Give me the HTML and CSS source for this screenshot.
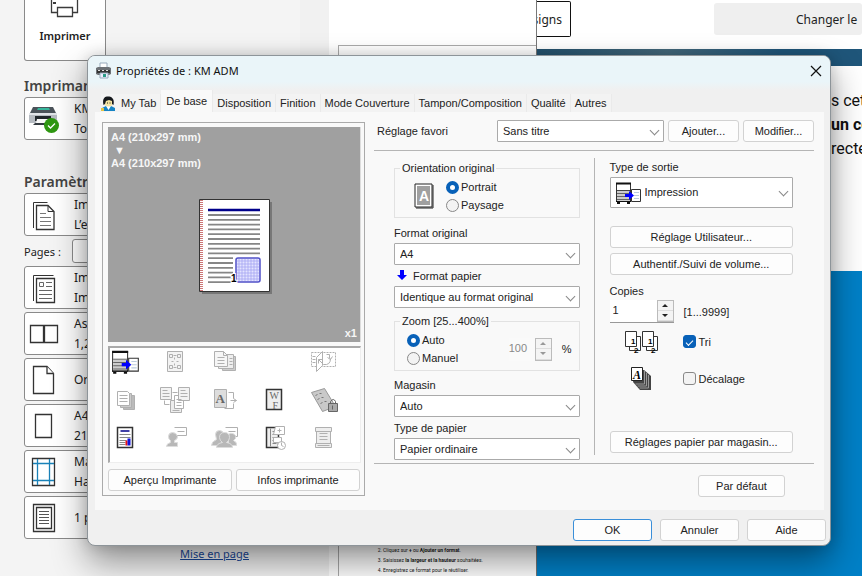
FILE: index.html
```html
<!DOCTYPE html>
<html lang="fr">
<head>
<meta charset="utf-8">
<title>Propriétés de : KM ADM</title>
<link rel="stylesheet" href="styles.css">
</head>
<body>
<svg class="defs" aria-hidden="true">
  <symbol id="output" viewBox="0 0 28 24">
    <path d="M1.500 2.500h14v18h-14z" fill="#fff" stroke="#333"/>
    <path d="M1 2.500h15" stroke="#111" stroke-width="2"/>
    <path d="M2 9.500h13" stroke="#444"/>
    <path d="M2 10h13v10H2z" fill="#ccc"/>
    <path d="M2 12.500h13M2 15.500h13M2 18.500h13" stroke="#666"/>
    <path d="M1 20.500h15" stroke="#111"/>
    <path d="M2 22h3M12 22h3" stroke="#111" stroke-width="2"/>
    <path d="M16.500 8.500h9v12h-9z" fill="#fff" stroke="#333"/>
    <path d="M19 11.500h5M19 14.500h5M19 17.500h5" stroke="#bcd"/>
    <path d="M10 13h4v-3l5 4.500-5 4.500v-3h-4z" fill="#00f"/>
  </symbol>
</svg>

<div class="desktop">
  <aside class="print-pane">
    <button class="print-button" type="button">
      <svg width="30" height="24" viewBox="0 0 30 24" fill="#fff" stroke="#3b3b3b" stroke-width="1.300"><path d="M1.500 0v18.500h26V0"/><path d="M7.500 13.500h15v9h-15z"/><path d="M3 9h3" stroke-width="2"/></svg>
      Imprimer
    </button>
    <h2>Imprimante</h2>
    <button class="option printer" type="button">
      <svg width="32" height="30" viewBox="0 0 32 30"><path d="M5 3h20l3 6H2z" fill="#4b535a"/><path d="M10 4h11l1 2H9z" fill="#36b79c"/><path d="M1 9h28v10H1z" fill="#b7bcc2"/><path d="M1 9h28v2H1z" fill="#e1e4e8"/><path d="M7 12h16v5H7z" fill="#20262b"/><path d="M7 19h18v2H5z" fill="#343b41"/><path d="M9 15h12l1 4H8z" fill="#fafafa"/><circle cx="23.500" cy="21.500" r="7.500" fill="#2f9712"/><path d="M20 21.500l2.500 2.500 4.500-4.500" fill="none" stroke="#fff" stroke-width="1.300"/></svg>
      <span>KM ADM<br>Tonalité</span>
    </button>
    <h2 class="settings">Paramètres</h2>
    <button class="option" type="button">
      <svg width="32" height="32" viewBox="0 0 32 32" fill="none" stroke="#333"><path d="M5.500 29V3.500h14"/><path d="M8.500 6.500H20l6 6v18H8.500z" fill="#fff" stroke-width="1.300"/><path d="M20 6.500v6h6"/><path d="M12 14.500h6M12 18.500h11M12 22.500h11M12 26.500h11" stroke="#777"/></svg>
      <span>Imprimer toutes<br>L’ensemble</span>
    </button>
    <div class="pages"><label for="pages">Pages :</label><input id="pages" type="text"></div>
    <button class="option" type="button">
      <svg width="32" height="32" viewBox="0 0 32 32" fill="none" stroke="#333"><path d="M5.500 29V3.500h20"/><path d="M8.500 6.500h18v24h-18z" fill="#fff" stroke-width="1.300"/><path d="M11.500 10.500h4v4h-4zM18 10.500h6M18 14.500h6M11 18.500h13M11 22.500h13M11 26.500h13" stroke="#666"/></svg>
      <span>Impression recto<br>Imprimer</span>
    </button>
    <button class="option" type="button">
      <svg width="32" height="32" viewBox="0 0 32 32" fill="#fff" stroke="#333" stroke-width="1.300"><path d="M2.500 7.500h13v17h-13zM16.500 7.500h13v17h-13z"/></svg>
      <span>Assemblées<br>1,2,3</span>
    </button>
    <button class="option" type="button">
      <svg width="32" height="32" viewBox="0 0 32 32" fill="#fff" stroke="#333" stroke-width="1.300"><path d="M5.500 2.500H19l6.500 7v20h-20z"/><path d="M19 2.500v7h6.500"/></svg>
      <span>Orientation</span>
    </button>
    <button class="option" type="button">
      <svg width="32" height="32" viewBox="0 0 32 32" fill="#fff" stroke="#333" stroke-width="1.300"><path d="M7.500 4.500h16v23h-16z"/></svg>
      <span>A4<br>21 cm x 29,7</span>
    </button>
    <button class="option" type="button">
      <svg width="32" height="32" viewBox="0 0 32 32" fill="#fff" stroke="#333" stroke-width="1.300"><path d="M4.500 2.500h22v27h-22z"/><path d="M9.500 3v26M21.500 3v26M5 7.500h21M5 24.500h21" stroke="#1a82b8"/></svg>
      <span>Marges<br>Haut</span>
    </button>
    <button class="option" type="button">
      <svg width="32" height="32" viewBox="0 0 32 32" fill="#fff" stroke="#333" stroke-width="1.300"><path d="M5.500 2.500h21v27h-21z"/><path d="M8.500 5.500h15v21h-15z"/><path d="M11 9.500h10M11 12.500h10M11 15.500h10M11 18.500h10M11 21.500h10" stroke="#555" stroke-width="1"/></svg>
      <span>1 page</span>
    </button>
    <a class="setup" href="#">Mise en page</a>
  </aside>
  <section class="preview">
    <ol class="sheet" start="2">
      <li>Cliquez sur <b>+</b> ou <b>Ajouter un format</b>.</li>
      <li>Saisissez <b>la largeur et la hauteur</b> souhaitées.</li>
      <li>Enregistrez ce format pour le réutiliser.</li>
    </ol>
  </section>
  <main class="web">
    <header><a class="designs" href="#">signs</a><a class="change" href="#">Changer le</a></header>
    <div class="band"></div>
    <p class="article">s cet<br><b>un co</b><br>recte</p>
    <div class="hero"></div>
  </main>
</div>

<form class="dialog" role="dialog" aria-labelledby="title">
  <div class="titlebar">
    <svg width="18" height="18" viewBox="0 0 18 18"><path d="M5 1h7v6H5z" fill="#fff" stroke="#9ab"/><path d="M1 6l2-1h11l2 1v6l-2 1H3l-2-1z" fill="#6d7176"/><path d="M2 8h13v3H2z" fill="#333"/><path d="M3 8.500h2M7 8.500h2M11 8.500h2" stroke="#ddd"/><path d="M5 11h8v5H5z" fill="#eef" stroke="#9ab"/><path d="M8 12h3v3H8z" fill="#2a9b86"/></svg>
    <span id="title">Propriétés de : KM ADM</span>
    <button class="close" type="button" aria-label="Fermer"><svg width="12" height="12" viewBox="0 0 12 12" stroke="#111" stroke-width="1.200"><path d="M1 1l10 10M11 1L1 11"/></svg></button>
  </div>
  <nav class="tabs" role="tablist">
    <button type="button" role="tab"><svg width="15" height="15" viewBox="0 0 15 15"><path d="M1 15v-3l4-2h5l4 2v3z" fill="#1684c4"/><path d="M5 10h5l-2.500 4z" fill="#fff"/><circle cx="7.500" cy="6" r="4.500" fill="#f4e4a2"/><path d="M2.500 9C1 2 4 .5 7 .5S14 2 12.500 9L11 8V5L8 4 5 5 4 8z" fill="#15181c"/><path d="M6 7h1M8.500 7h1" stroke="#222"/><path d="M0 12h3v3H0z" fill="#e3c544"/></svg>My Tab</button>
    <button type="button" role="tab" aria-selected="true">De base</button>
    <button type="button" role="tab">Disposition</button>
    <button type="button" role="tab">Finition</button>
    <button type="button" role="tab">Mode Couverture</button>
    <button type="button" role="tab">Tampon/Composition</button>
    <button type="button" role="tab">Qualité</button>
    <button type="button" role="tab">Autres</button>
  </nav>

  <div class="panel">
    <section class="summary">
      <div class="paper">
        <div class="sizes">A4 (210x297 mm)<span class="down">▼</span>A4 (210x297 mm)</div>
        <svg class="page" width="76" height="98" viewBox="0 0 76 98">
          <path d="M4 4h70v92H4z" fill="#777"/><path d="M1.500 1.500h70v92h-70z" fill="#fff" stroke="#333"/>
          <path d="M3.500 2v91" stroke="#c77" stroke-dasharray="1 1" stroke-width="3"/>
          <path d="M10 12h52" stroke="#00008b" stroke-width="2.500"/>
          <path d="M10 17h52M10 21.800h52M10 26.600h52M10 31.400h52M10 36.200h52M10 41h52M10 45.800h52M10 50.600h52M10 55.400h52M10 60.200h25M10 65h25M10 69.800h25M10 74.600h25M10 79.400h25M10 84.200h25" stroke="#868686" stroke-width="1.800"/>
          <rect x="38" y="60" width="24" height="24" rx="2" fill="#e4e4ff" stroke="#5050c8" stroke-width="1.500"/>
          <path d="M41 61v22M44 61v22M47 61v22M50 61v22M53 61v22M56 61v22M59 61v22M39 63h22M39 66h22M39 69h22M39 72h22M39 75h22M39 78h22M39 81h22" stroke="#a5a5f2" stroke-width=".8"/>
          <text x="33" y="84" class="page-no">1</text>
        </svg>
        <span class="count">x1</span>
      </div>
      <div class="icons">
        <svg viewBox="0 0 28 24"><use href="#output"/></svg>
        <svg class="dim" viewBox="-.5 -.5 30 28"><path d="M7 3h15v20H7z" fill="#f3f3f3"/><path d="M9 6h3v3H9zM17 6h3v3h-3zM9 17h3v3H9zM17 17h3v3h-3zM11 13h2M16 13h2M14 9v2M14 15v2M13 7h3M13 19h3"/></svg>
        <svg class="dim" viewBox="-.5 -.5 30 28"><path d="M11 8h14v14H12z" fill="#ccc"/><path d="M8 6h15v14H8z" fill="#eee"/><path d="M4 3h9l4 4v11H4z" fill="#f6f6f6"/><path d="M13 3v4h4M7 9h7M7 12h7M7 15h7M19 10h3M19 13h3M19 16h3"/></svg>
        <svg></svg>
        <svg class="dim" viewBox="-.5 -.5 30 28"><path d="M3 4h24v14H3z" stroke-dasharray="2 1"/><path d="M8 9l6-6v14l-6 6z" fill="#fff"/><path d="M4 8h3M4 11h3M4 14h3M10 11l5 5M10 11h4M10 11v4M15 16q7 1 7-6M18 6h3v4M24 8l-2 3-3-2"/></svg>

        <svg class="dim" viewBox="-.5 -.5 30 28"><path d="M12 9h11v14H12z" fill="#bbb"/><path d="M9 7h11v14H9z" fill="#ccc"/><path d="M6 5h10l2 2v12H6z" fill="#fff"/><path d="M8 9h8M8 12h8M8 15h8"/></svg>
        <svg class="dim" viewBox="-.5 -.5 30 28"><path d="M10 14h11v12H10z" fill="#eee"/><path d="M14 9h9v13h-9z" fill="#fff"/><path d="M0 1h11v12H0zM18 1h11v13H18z" fill="#f3f3f3"/><path d="M2 4h5M2 7h7M2 10h7M20 4h5M20 7h7M20 10h7M12 24h7M16 13h5M16 16h5M16 19h5"/><path d="M4 14v4h5M12 6h5"/></svg>
        <svg class="dim" viewBox="-.5 -.5 30 28"><path d="M4 3h12v18H4z" fill="#ddd"/><path d="M18 6h5v6M23 17v5h-9M20 14h6M23 12l3 2-3 2"/><text x="5" y="16">A</text></svg>
        <svg class="mono" viewBox="-.5 -.5 30 28"><path d="M7 3h15v20H7z" fill="#eee" stroke="#333" stroke-width="1.500"/><text x="10" y="12">W</text><text x="13" y="22">F</text></svg>
        <svg class="dim" viewBox="-.5 -.5 30 28"><path d="M3 6l13-4 11 18-13 5z" fill="#c9c9c9" stroke="#999"/><path d="M7 9l2-1M11 7h2M9 13l2-1M13 11h2M12 17l2-1M16 15h2" stroke="#777"/><path d="M20 17h9v8h-9z" fill="#aaa" stroke="#666"/><path d="M22 17v-2q3-4 5 0v2M24 19v4" stroke="#666"/></svg>

        <svg class="mono" viewBox="-.5 -.5 30 28"><path d="M6 3h15v20H6z" fill="#fff" stroke="#333" stroke-width="1.500"/><path d="M9 6.500h9" stroke="#008" stroke-width="1.500"/><path d="M8 10h11M8 13h11M8 16h7M8 18h6M8 20h6" stroke="#888"/><path d="M14 16h2v5h-2z" fill="#e11"/><path d="M16 14h3v7h-3z" fill="#11d"/></svg>
        <svg class="dim person" viewBox="-.5 -.5 30 28"><path d="M14 3h12v8H15M17 7h7"/><path d="M8 12q0-4 4-4t5 4q0 3-3 4v2h3v4H6q0-3 4-4v-2q-2-1-2-4z"/></svg>
        <svg class="dim person" viewBox="-.5 -.5 30 28"><path d="M15 3h12v9h-9M18 7h7"/><path d="M5 10q0-4 4-4t4 4l-2 4v7H1q0-4 5-6zM18 12q0-4 4-3t3 5l-2 2q4 2 3 5h-8z"/><path d="M9 13q0-5 5-5t5 5q0 3-3 5 6 1 6 5H6q0-4 6-5-3-2-3-5z"/></svg>
        <svg class="dim" viewBox="-.5 -.5 30 28"><path d="M7 3h12v20H7z" fill="#eee" stroke="#333" stroke-width="1.500"/><path d="M11 4v18M13 7h5M13 10h5M13 13h5M13 16h4M13 19h4" stroke="#888"/><path d="M16 2h9v8H14zM18 6h4M20 4v4" fill="#fff"/><path d="M14 13h8v5h-8z" fill="#fff"/><circle cx="22" cy="21" r="4" fill="#fff"/><path d="M22 18v3l2 1"/></svg>
        <svg class="dim" viewBox="-.5 -.5 30 28"><path d="M7 3h16v4H7zM8 7h14v12H8zM7 19h16v4H7z" fill="#eee"/><path d="M11 9h8M11 12h8M11 15h8M9 21h12"/></svg>
      </div>
      <div class="pair"><button type="button">Aperçu Imprimante</button><button type="button">Infos imprimante</button></div>
    </section>

    <section class="settings-area">
      <div class="favorite">
        <label for="fav">Réglage favori</label>
        <span class="select fav"><select id="fav"><option>Sans titre</option></select></span>
        <button type="button">Ajouter...</button><button type="button">Modifier...</button>
      </div>
      <div class="columns">
        <div class="column">
          <fieldset class="orientation">
            <legend>Orientation original</legend>
            <svg width="20" height="26" viewBox="0 0 20 26"><path d="M1 1h17v23H1z" fill="#fff" stroke="#222"/><path d="M19 2v23H2" fill="none" stroke="#222"/><path d="M3 3h13v19H3z" fill="#a0a0a0"/><text x="5" y="18" class="letter">A</text></svg>
            <div class="choices">
              <label><input type="radio" name="orient" checked>Portrait</label>
              <label><input type="radio" name="orient">Paysage</label>
            </div>
          </fieldset>
          <div class="field after-group">
            <label for="format">Format original</label>
            <span class="select"><select id="format"><option>A4</option></select></span>
          </div>
          <div class="field">
            <label for="paper"><svg width="19" height="14" viewBox="0 0 19 14"><path d="M6 1h4v5h3L8 11 3 6h3z" fill="#00f"/></svg>Format papier</label>
            <span class="select"><select id="paper"><option>Identique au format original</option></select></span>
          </div>
          <fieldset class="zoom">
            <legend>Zoom [25...400%]</legend>
            <div class="choices">
              <label><input type="radio" name="zoom" checked>Auto</label>
              <label><input type="radio" name="zoom">Manuel</label>
            </div>
            <span class="spin off"><input type="text" value="100" aria-label="Zoom" disabled><span class="steps"><button type="button" aria-label="Plus" disabled></button><button type="button" aria-label="Moins" disabled></button></span></span>
            <span class="unit">%</span>
          </fieldset>
          <div class="field after-group">
            <label for="tray">Magasin</label>
            <span class="select"><select id="tray"><option>Auto</option></select></span>
          </div>
          <div class="field">
            <label for="type">Type de papier</label>
            <span class="select"><select id="type"><option>Papier ordinaire</option></select></span>
          </div>
        </div>
        <div class="divider"></div>
        <div class="column output">
          <div class="field">
            <label for="out">Type de sortie</label>
            <span class="select tall"><svg width="28" height="24"><use href="#output"/></svg><select id="out"><option>Impression</option></select></span>
          </div>
          <div class="actions"><button type="button">Réglage Utilisateur...</button><button type="button">Authentif./Suivi de volume...</button></div>
          <div class="field">
            <label for="copies">Copies</label>
            <div class="copies"><span class="spin"><input id="copies" type="text" value="1"><span class="steps"><button type="button" aria-label="Plus"></button><button type="button" aria-label="Moins"></button></span></span><span>[1...9999]</span></div>
          </div>
          <div class="check">
            <svg width="36" height="24" viewBox="0 0 36 24" fill="#fff" stroke="#333"><path d="M13.500 6.500h4v14h-11v-4M30.500 6.500h4v14h-11v-4"/><path d="M2.500 1.500h11v15h-11zM19.500 1.500h11v15h-11z"/><text x="8" y="14">1</text><text x="25" y="14">1</text><text x="11" y="23">2</text><text x="28" y="23">2</text></svg>
            <label><input type="checkbox" checked>Tri</label>
          </div>
          <div class="check">
            <svg width="36" height="26" viewBox="0 0 36 26"><path d="M12 4h9l7 6v14H17l-7-8z" fill="#444"/><path d="M21.500 5v13h-9M23.500 7v13h-9M25.500 9v13h-9" fill="none" stroke="#999"/><path d="M8.500 1.500h11v13h-11z" fill="#fff" stroke="#222"/><text x="10" y="13" class="italic">A</text></svg>
            <label><input type="checkbox">Décalage</label>
          </div>
          <button class="trays" type="button">Réglages papier par magasin...</button>
        </div>
      </div>
      <button class="default" type="button">Par défaut</button>
    </section>
  </div>
  <footer><button class="primary" type="submit">OK</button><button type="button">Annuler</button><button type="button">Aide</button></footer>
</form>
</body>
</html>
```
FILE: styles.css
```css
* { box-sizing: border-box; }
body { margin: 0; min-height: 100vh; overflow: hidden; position: relative; font: 11px "Liberation Sans", sans-serif; color: #222; background: #fff; }
button, input, select { font: inherit; color: inherit; margin: 0; }
.defs { position: absolute; width: 0; height: 0; }

/* Background windows */
.desktop { display: grid; grid-template-columns: 329px 208px minmax(0, 1fr); height: 100vh; overflow: hidden; }
.print-pane { background: #f4f4f4; border-right: 29px solid #f1f1f1; padding-left: 24px; font: 12px "Noto Sans", sans-serif; display: flex; flex-direction: column; }
.print-pane > * { flex: none; }
.print-button { width: 82px; height: 61px; border: 1px solid #8a8a8a; border-top: 0; border-radius: 0 0 3px 3px; background: #fff; padding: 0 0 17px; display: flex; flex-direction: column; align-items: center; justify-content: space-between; font-size: 11px; font-weight: 600; }
.print-button svg { margin-top: -6px; }
.print-pane h2 { margin: 13px 0 0; font-size: 14px; font-weight: 600; line-height: 23px; color: #444; }
.print-pane .settings { margin-top: 30px; }
.option { height: 43px; margin-bottom: 3px; border: 1px solid #8a8a8a; border-radius: 3px; background: #fff; padding: 0 0 0 3px; display: flex; align-items: center; gap: 14px; text-align: left; line-height: 20px; }
.option svg { flex: none; }
.option.printer { margin-bottom: 0; }
.pages { display: flex; align-items: center; gap: 10px; height: 24px; margin: 0 0 3px; }
.pages label { width: 38px; font-size: 11px; white-space: nowrap; }
.pages input { flex: 1; min-width: 0; height: 24px; border: 1px solid #8a8a8a; border-radius: 3px; background: #fff; }
.setup { align-self: flex-end; margin: 3px 51px 0 0; font-size: 11px; line-height: 18px; color: #1a4a9c; }
.preview { background: #fff; border-right: 1px solid #777; padding: 45px 0 0 9px; display: flex; }
.sheet { flex: 1; margin: 0; border: solid #aaa; border-width: 1px 0 0 1px; padding: 0 0 1px 44px; display: flex; flex-direction: column; justify-content: flex-end; font: 5px/10px Roboto, sans-serif; }
.web { display: grid; grid-template: 49px 17px 205px 1fr / minmax(0, 1fr); overflow: hidden; }
.web header { display: flex; justify-content: space-between; padding: 1px 0; }
.designs, .change { flex: none; font: 12px/36px "Noto Sans", sans-serif; color: #222; text-decoration: none; white-space: nowrap; height: 36px; }
.designs { border: 1px solid #111; border-left: 0; border-radius: 0 2px 2px 0; width: 34px; padding-right: 8px; display: flex; justify-content: flex-end; }
.change { background: #efefef; border-radius: 3px; width: 148px; height: 32px; line-height: 34px; margin-top: 2px; padding-left: 82px; }
.band { background: linear-gradient(90deg, #23516d, #43677a 40%, #1f567a 75%); }
.article { margin: 23px 0 0; padding-left: 294px; font: 16px/24px Roboto, sans-serif; color: #111; white-space: nowrap; }
.hero { background: #0080c7; }

/* Properties window */
.dialog { position: absolute; left: 87px; right: 31px; top: 55px; margin: 0; background: #f0f0f0; border: 1px solid #8d9499; border-radius: 8px; overflow: hidden; box-shadow: 0 16px 34px rgba(0,0,0,.42), 0 0 14px rgba(0,0,0,.14); }
.titlebar { height: 34px; padding: 0 7px 5px; display: flex; align-items: center; gap: 3px; background: linear-gradient(#eaf5f9 75%, #f0f0f0); font: 11px "Noto Sans", sans-serif; color: #111; }
.close { margin-left: auto; border: 0; padding: 0; background: none; width: 14px; height: 14px; display: grid; place-items: center; }
.tabs { display: flex; align-items: flex-end; height: 22px; padding-left: 13px; }
.tabs button { display: flex; align-items: center; gap: 5px; height: 18px; padding: 0 4px; border: 0; border-right: 1px solid #eaeaea; background: #f3f3f3; white-space: nowrap; }
.tabs button:first-child { padding-left: 0; }
.tabs [aria-selected] { height: 22px; background: #f9f9f9; padding: 0 5px; }
.panel { margin: 0 6px 0 7px; background: #f9f9f9; padding: 8px 10px 13px 7px; display: grid; grid-template-columns: 263px 1fr; gap: 9px; }
.dialog button:not(.close):not([role]) { background: #fdfdfd; border: 1px solid #d2d2d2; border-radius: 3px; padding: 0; height: 22px; white-space: nowrap; }

.summary { align-self: start; margin-top: 2px; border: 1px solid #aaa; padding: 4px 3px 4px 5px; }
.paper { position: relative; height: 215px; background: #a0a0a0; border-right: 1px solid #ddd; display: grid; place-items: center; color: #f6f6f6; font-weight: bold; }
.sizes { position: absolute; left: 3px; top: 4px; line-height: 13px; }
.down { display: block; padding-left: 3px; }
.count { position: absolute; right: 3px; bottom: 3px; }
.page { margin: 24px 0 0 4px; }
.page-no { font: bold 10px "Liberation Sans", sans-serif; fill: #000; stroke: #fff; stroke-width: 2px; paint-order: stroke; }
.icons { margin: 4px 0 6px; height: 117px; background: #fff; border: 1px solid #aaa; border-width: 2px 1px 1px 2px; border-right-color: #eee; border-bottom-color: #eee; padding: 0 22px 0 1px; display: grid; grid-template-columns: repeat(5, 30px); grid-auto-rows: 28px; justify-content: space-between; row-gap: 10px; }
.icons svg { width: 30px; height: 28px; }
.dim { fill: none; stroke: #b0b0b0; }
.dim text { font: bold 13px "Liberation Serif", serif; fill: #666; stroke: none; }
.mono text { font: 10px "Liberation Serif", serif; fill: #666; }
.person path:nth-child(n+2) { fill: #b8b8b8; stroke: #ddd; }
.pair { display: grid; grid-template-columns: 1fr 1fr; gap: 4px; padding: 0 1px 0 0; }

.settings-area { display: flex; flex-direction: column; min-width: 0; }
.favorite { display: flex; align-items: center; gap: 4px; padding: 0 0 8px 3px; border-bottom: 1px solid #b5b5b5; margin-bottom: 7px; }
.favorite label { flex: 1; }
.favorite button { width: 71px; }
.select { position: relative; display: block; }
.fav { width: 167px; }
.select select { appearance: none; display: block; width: 100%; height: 22px; border: 1px solid #aaa; border-radius: 1px; background: #fff; padding: 0 20px 1px 5px; }
.select::after { content: ""; position: absolute; right: 6px; top: 7px; width: 6px; height: 6px; border: solid #888; border-width: 0 1px 1px 0; transform: rotate(45deg); pointer-events: none; }
.select.tall select { height: 31px; padding-left: 34px; }
.select.tall::after { top: 11px; }
.select.tall svg { position: absolute; left: 5px; top: 4px; }
.columns { display: grid; grid-template-columns: 1fr 1px 1fr; border-bottom: 1px solid #b5b5b5; padding-bottom: 3px; margin-bottom: 11px; }
.divider { background: #b5b5b5; margin-bottom: 5px; }
.column { min-width: 0; padding: 3px 14px 0 20px; display: flex; flex-direction: column; }
fieldset { margin: 0; padding: 3px 0; border: 1px solid #e2e2e2; min-width: 0; display: flex; align-items: center; }
legend { line-height: 14px; margin-left: 5px; padding: 0 2px; }
.orientation svg { margin: 0 12px 0 19px; }
.choices label { display: flex; align-items: center; gap: 2px; height: 18px; }
.choices input, .check input { appearance: none; width: 13px; height: 13px; flex: none; border: 1px solid #888; background: #f3f3f3; }
.choices input { border-radius: 50%; }
.choices input:checked { border: 4px solid #0861b8; background: #fff; }
.letter { font: bold 14px "Liberation Sans", sans-serif; fill: #fff; }
.field > label { display: flex; align-items: center; height: 16px; margin-bottom: 2px; }
.field + .field { margin-top: 3px; }
fieldset + .field.after-group { margin-top: 6px; }
.orientation + .field.after-group { margin-top: 7px; }
.zoom { margin-top: 6px; }
.zoom .choices { flex: 1; padding-left: 12px; }
.unit { margin: 0 7px 0 10px; }
.spin { display: flex; width: 64px; height: 23px; border-bottom: 1px solid #999; }
.spin input { width: 47px; flex: 1; min-width: 0; border: 0; background: #fff; padding: 0 0 3px 3px; }
.steps { display: grid; width: 17px; grid-template-rows: 1fr 1fr; border: 1px solid #bbb; }
.dialog .steps button:not(.close):not([role]) { height: auto; border: 0; border-bottom: 1px solid #ddd; border-radius: 0; background: #f4f4f4; display: grid; place-items: center; }
.steps button::before { content: ""; border: 3px solid transparent; border-top: 0; border-bottom-color: #222; }
.steps button:last-child::before { transform: scaleY(-1); }
.spin.off { width: 43px; border: 0; color: #888; }
.off input { background: #fafafa; padding: 0 0 2px; }
.off .steps button::before { border-bottom-color: #999; }
.output { padding: 1px 21px 0 15px; }
.actions { display: grid; gap: 5px; margin: 18px 0 8px; }
.copies { display: flex; align-items: center; gap: 10px; margin-top: -1px; }
.check { display: flex; align-items: center; height: 37px; padding-left: 13px; gap: 24px; }
.check label { display: flex; align-items: center; gap: 3px; }
.check input { border-radius: 3px; display: grid; place-items: center; }
.check input:checked { background: #0861b8; border-color: #0861b8; }
.check input:checked::after { content: ""; width: 6px; height: 3px; border: solid #fff; border-width: 0 0 1px 1px; transform: rotate(-45deg); }
.check text { font: bold 8px "Liberation Sans", sans-serif; fill: #000; stroke: none; }
.check .italic { font: italic bold 12px "Liberation Serif", serif; }
.trays { margin-top: auto; margin-bottom: 7px; }
.default { align-self: flex-end; width: 87px; margin-right: 29px; }
footer { display: flex; justify-content: flex-end; gap: 8px; padding: 9px 4px 4px; }
footer button { width: 79px; }
.dialog footer .primary:not(.close):not([role]) { border-color: #3a8fd9; }
```
